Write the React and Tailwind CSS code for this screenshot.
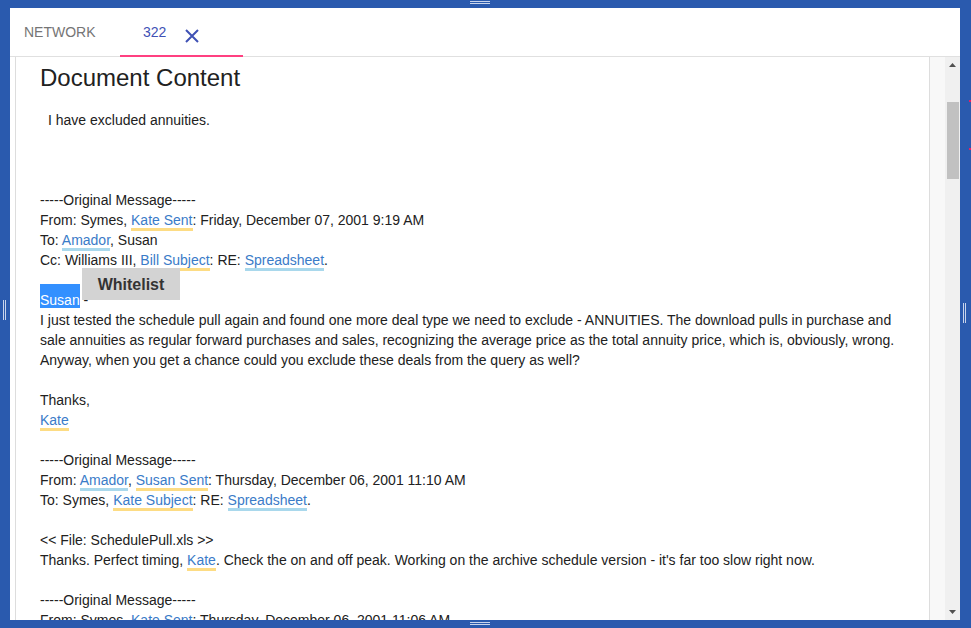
import React from "react";

const Y = ({ children }) => (
  <span className="text-[#3a7bc8] border-b-[3px] border-[#fddc84]">{children}</span>
);
const B = ({ children }) => (
  <span className="text-[#3a7bc8] border-b-[3px] border-[#a9d8ec]">{children}</span>
);
const L = ({ children }) => <div className="min-h-[20px]">{children}</div>;

export default function App() {
  return (
    <div
      className="relative w-[971px] h-[628px] bg-[#2a5aae] pt-2 pl-[10px] pr-[11px] pb-2 overflow-hidden"
      style={{ fontFamily: '"Liberation Sans", Arial, sans-serif' }}
    >
      {/* resize handles */}
      <div className="absolute left-[470px] top-[1px] w-[20px] h-[3px] border-y border-[#c8d4ec]" />
      <div className="absolute left-[470px] top-[622px] w-[20px] h-[3px] border-y border-[#c8d4ec]" />
      <div className="absolute left-[3px] top-[300px] w-[3px] h-[20px] border-x border-[#c8d4ec]" />
      <div className="absolute left-[963px] top-[303px] w-[3px] h-[20px] border-x border-[#c8d4ec]" />
      <div className="absolute left-[969px] top-[100px] w-[2px] h-[2px] bg-[#e91e63]" />
      <div className="absolute left-[969px] top-[148px] w-[2px] h-[2px] bg-[#e91e63]" />

      <div className="flex flex-col bg-white h-full">
        {/* tabs */}
        <div className="flex h-[49px] border-b border-[#e0e0e0] shrink-0">
          <div className="flex items-center pl-[14px] w-[110px] pt-[1px] text-[14px] text-[#757575] uppercase">
            Network
          </div>
          <div className="relative flex items-center pl-[23px] w-[123px] pt-[1px]">
            <span className="text-[14px] text-[#3f51b5]">322</span>
            <svg className="ml-[18px] mt-[7px]" width="16" height="16" viewBox="0 0 16 16">
              <path d="M2 2 L14 14 M14 2 L2 14" stroke="#3f51b5" strokeWidth="2" fill="none" />
            </svg>
            <div className="absolute left-0 right-0 bottom-[-1px] h-[2px] bg-[#ff4081]" />
          </div>
        </div>

        {/* body */}
        <div className="flex flex-1 min-h-0 overflow-hidden">
          <div className="w-[5px] shrink-0" />
          <div className="flex-1 border-x border-[#dddddd] px-6 pt-[5px] text-[14px] leading-[20px] text-[#212121] overflow-hidden">
            <h1 className="text-[24px] leading-[32px] text-[#212121] mb-4">Document Content</h1>
            <L><span className="ml-2">I have excluded annuities.</span></L>
            <L />
            <L />
            <L />
            <L>-----Original Message-----</L>
            <L>
              From: Symes, <Y>Kate Sent</Y>: Friday, December 07, 2001 9:19 AM
            </L>
            <L>
              To: <B>Amador</B>, Susan
            </L>
            <L>
              Cc: Williams III, <Y>Bill Subject</Y>: RE: <B>Spreadsheet</B>.
            </L>
            <L />
            <div className="relative min-h-[20px]">
              <span className="bg-[#3390ff] text-white pt-[8px]">Susan</span> -
              <div className="absolute left-[42px] top-[-22px] w-[98px] h-[32px] bg-[#d3d3d3] flex items-center justify-center pt-[2px] text-[16px] font-bold text-[#333]">
                Whitelist
              </div>
            </div>
            <L>
              I just tested the schedule pull again and found one more deal type we need to exclude - ANNUITIES. The download pulls in purchase and sale annuities as regular forward purchases and sales, recognizing the average price as the total annuity price, which is, obviously, wrong. Anyway, when you get a chance could you exclude these deals from the query as well?
            </L>
            <L />
            <L>Thanks,</L>
            <L>
              <Y>Kate</Y>
            </L>
            <L />
            <L>-----Original Message-----</L>
            <L>
              From: <B>Amador</B>, <Y>Susan Sent</Y>: Thursday, December 06, 2001 11:10 AM
            </L>
            <L>
              To: Symes, <Y>Kate Subject</Y>: RE: <B>Spreadsheet</B>.
            </L>
            <L />
            <L>&lt;&lt; File: SchedulePull.xls &gt;&gt;</L>
            <L>
              Thanks. Perfect timing, <Y>Kate</Y>. Check the on and off peak. Working on the archive schedule version - it's far too slow right now.
            </L>
            <L />
            <L>-----Original Message-----</L>
            <L>
              From: Symes, <Y>Kate Sent</Y>: Thursday, December 06, 2001 11:06 AM
            </L>
          </div>
          <div className="w-[15px] shrink-0 bg-[#f8f8f8]" />
          <div className="relative w-[15px] shrink-0 bg-[#f0f0f0]">
            <svg className="absolute left-[3px] top-[5px]" width="9" height="6" viewBox="0 0 9 6">
              <path d="M4.5 1 L8 5 L1 5 Z" fill="#505050" />
            </svg>
            <div className="absolute left-[2px] right-[1px] top-[45px] h-[77px] bg-[#c1c1c1]" />
            <svg className="absolute left-[3px] bottom-[5px]" width="9" height="6" viewBox="0 0 9 6">
              <path d="M1 1 L8 1 L4.5 5 Z" fill="#505050" />
            </svg>
          </div>
        </div>
      </div>
    </div>
  );
}
